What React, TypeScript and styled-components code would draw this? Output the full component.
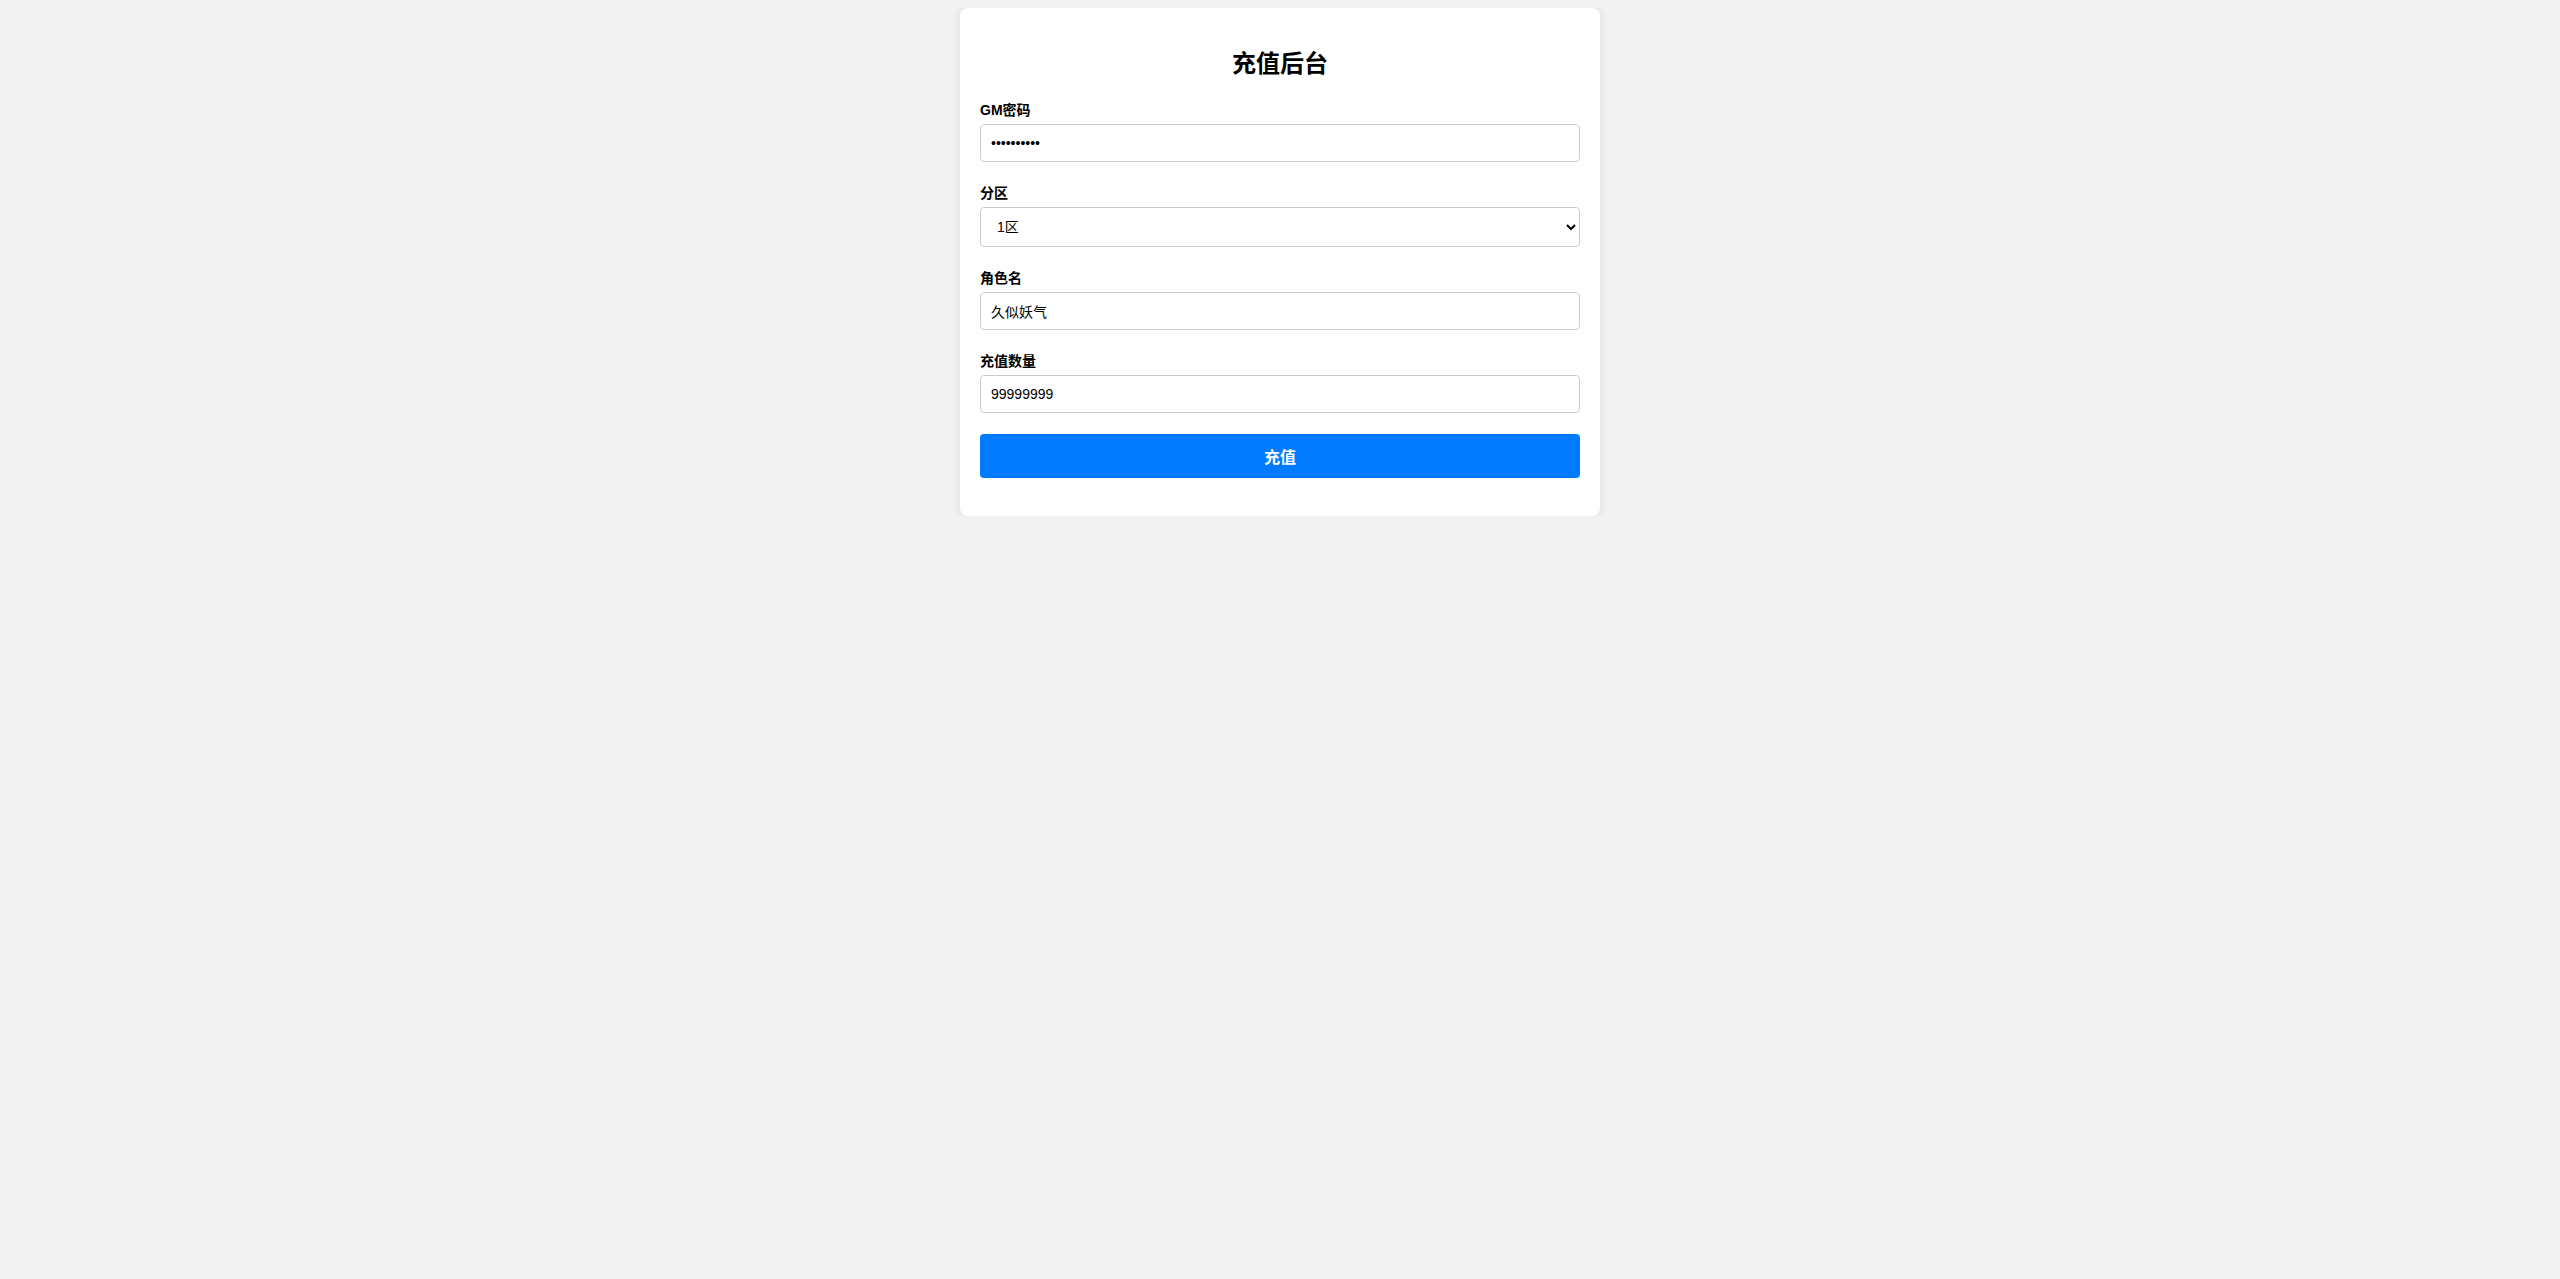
import React, { useState } from 'react';
import styled, { createGlobalStyle } from 'styled-components';

const GlobalStyle = createGlobalStyle`
  body {
    margin: 8px;
    background: #f2f2f2;
    font-family: "Liberation Sans", Arial, "Noto Sans CJK SC", sans-serif;
    color: #000;
  }
`;

const Card = styled.div`
  max-width: 600px;
  margin: 0 auto;
  padding: 20px 20px 38px;
  background: #fff;
  border-radius: 8px;
  box-shadow: 0 0 10px rgba(0, 0, 0, 0.1);
`;

const Title = styled.h2`
  margin: 22px 0 24px;
  font-size: 24px;
  line-height: 28px;
  font-weight: bold;
  text-align: center;
`;

const Form = styled.form`
  display: flex;
  flex-direction: column;
`;

const FieldGroup = styled.div<{ $gap?: number }>`
  display: flex;
  flex-direction: column;
  margin-bottom: ${(p) => p.$gap ?? 23}px;
`;

const Label = styled.label`
  display: block;
  margin-bottom: 6px;
  font-size: 14px;
  line-height: 16px;
  font-weight: bold;
`;

const TextInput = styled.input`
  width: 100%;
  box-sizing: border-box;
  padding: 10px;
  border: 1px solid #ccc;
  border-radius: 4px;
  background: #fff;
  font-family: inherit;
  font-size: 14px;
  line-height: 16px;
  height: 38px;
  color: #000;
  outline: none;
`;

const Select = styled.select`
  width: 100%;
  box-sizing: border-box;
  height: 40px;
  padding: 0 8px 0 12px;
  border: 1px solid #ccc;
  border-radius: 4px;
  background: #fff;
  font-family: inherit;
  font-size: 14px;
  color: #000;
  outline: none;
`;

const SubmitButton = styled.button`
  width: 100%;
  height: 44px;
  border: none;
  border-radius: 4px;
  background: #007bff;
  color: #fff;
  font-family: inherit;
  font-size: 16px;
  font-weight: bold;
  cursor: pointer;
`;

const App = () => {
  const [password, setPassword] = useState('1234567890');
  const [zone, setZone] = useState('1');
  const [role, setRole] = useState('久似妖气');
  const [amount, setAmount] = useState('99999999');

  const onSubmit = (e: React.FormEvent) => {
    e.preventDefault();
  };

  return (
    <>
      <GlobalStyle />
      <Card>
        <Title>充值后台</Title>
        <Form onSubmit={onSubmit}>
          <FieldGroup>
            <Label htmlFor="gm">GM密码</Label>
            <TextInput
              id="gm"
              type="password"
              value={password}
              onChange={(e) => setPassword(e.target.value)}
            />
          </FieldGroup>
          <FieldGroup>
            <Label htmlFor="zone">分区</Label>
            <Select id="zone" value={zone} onChange={(e) => setZone(e.target.value)}>
              <option value="1">1区</option>
              <option value="2">2区</option>
              <option value="3">3区</option>
            </Select>
          </FieldGroup>
          <FieldGroup>
            <Label htmlFor="role">角色名</Label>
            <TextInput id="role" type="text" value={role} onChange={(e) => setRole(e.target.value)} />
          </FieldGroup>
          <FieldGroup $gap={21}>
            <Label htmlFor="amount">充值数量</Label>
            <TextInput
              id="amount"
              type="number"
              value={amount}
              onChange={(e) => setAmount(e.target.value)}
            />
          </FieldGroup>
          <SubmitButton type="submit">充值</SubmitButton>
        </Form>
      </Card>
    </>
  );
};

export default App;
